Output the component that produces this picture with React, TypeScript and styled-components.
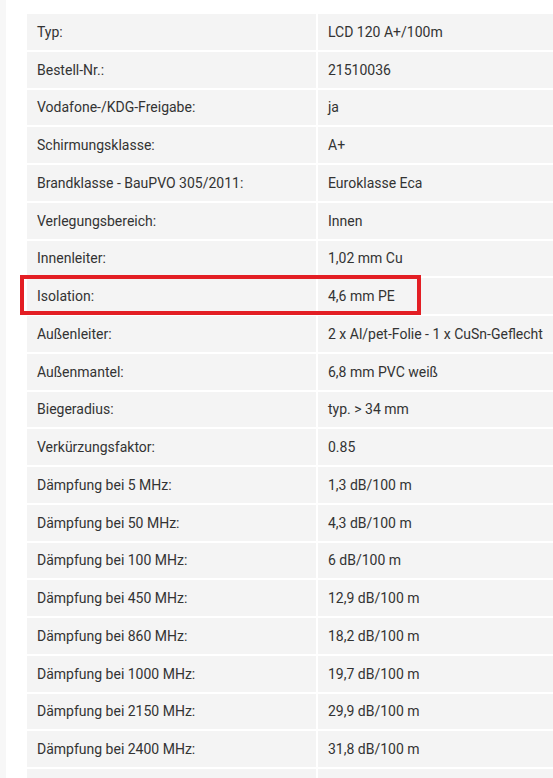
import React from 'react';
import styled, { createGlobalStyle } from 'styled-components';

interface Spec {
  label: string;
  value: string;
  highlight?: boolean;
}

const specs: Spec[] = [
  { label: 'Typ:', value: 'LCD 120 A+/100m' },
  { label: 'Bestell-Nr.:', value: '21510036' },
  { label: 'Vodafone-/KDG-Freigabe:', value: 'ja' },
  { label: 'Schirmungsklasse:', value: 'A+' },
  { label: 'Brandklasse - BauPVO 305/2011:', value: 'Euroklasse Eca' },
  { label: 'Verlegungsbereich:', value: 'Innen' },
  { label: 'Innenleiter:', value: '1,02 mm Cu' },
  { label: 'Isolation:', value: '4,6 mm PE', highlight: true },
  { label: 'Außenleiter:', value: '2 x Al/pet-Folie - 1 x CuSn-Geflecht' },
  { label: 'Außenmantel:', value: '6,8 mm PVC weiß' },
  { label: 'Biegeradius:', value: 'typ. > 34 mm' },
  { label: 'Verkürzungsfaktor:', value: '0.85' },
  { label: 'Dämpfung bei 5 MHz:', value: '1,3 dB/100 m' },
  { label: 'Dämpfung bei 50 MHz:', value: '4,3 dB/100 m' },
  { label: 'Dämpfung bei 100 MHz:', value: '6 dB/100 m' },
  { label: 'Dämpfung bei 450 MHz:', value: '12,9 dB/100 m' },
  { label: 'Dämpfung bei 860 MHz:', value: '18,2 dB/100 m' },
  { label: 'Dämpfung bei 1000 MHz:', value: '19,7 dB/100 m' },
  { label: 'Dämpfung bei 2150 MHz:', value: '29,9 dB/100 m' },
  { label: 'Dämpfung bei 2400 MHz:', value: '31,8 dB/100 m' },
  // next row only peeks in at the bottom edge, its text is below the fold
  { label: '', value: '' },
];

const GlobalStyle = createGlobalStyle`
  html, body {
    margin: 0;
    padding: 0;
    background: #ffffff;
    overflow: hidden;
  }
`;

const Page = styled.div`
  display: flex;
  width: 553px;
  height: 778px;
  overflow: hidden;
  font-family: Roboto, 'Liberation Sans', sans-serif;
  font-size: 14px;
  color: #333333;
`;

const SideStrip = styled.div`
  flex: 0 0 6px;
  background: #f7f7f7;
`;

const Content = styled.div`
  flex: 1;
  padding: 14px 0 0 21px;
  min-width: 0;
`;

const SpecTable = styled.div`
  display: flex;
  flex-direction: column;
  gap: 2px;
  width: 560px;
  background: #ffffff;
`;

const Row = styled.div`
  position: relative;
  display: grid;
  grid-template-columns: 289px 1fr;
  gap: 2px;
`;

const Cell = styled.div`
  display: flex;
  align-items: center;
  height: 35.75px;
  padding-left: 10px;
  background: #f4f4f4;
  white-space: nowrap;
`;

const Highlight = styled.div`
  position: absolute;
  left: -7px;
  top: -3px;
  width: 401px;
  height: 40px;
  box-sizing: border-box;
  border: 4px solid #e31e24;
  pointer-events: none;
`;

export default function App() {
  return (
    <>
      <GlobalStyle />
      <Page>
        <SideStrip />
        <Content>
          <SpecTable>
            {specs.map((s, i) => (
              <Row key={i}>
                <Cell>{s.label}</Cell>
                <Cell>{s.value}</Cell>
                {s.highlight && <Highlight />}
              </Row>
            ))}
          </SpecTable>
        </Content>
      </Page>
    </>
  );
}
